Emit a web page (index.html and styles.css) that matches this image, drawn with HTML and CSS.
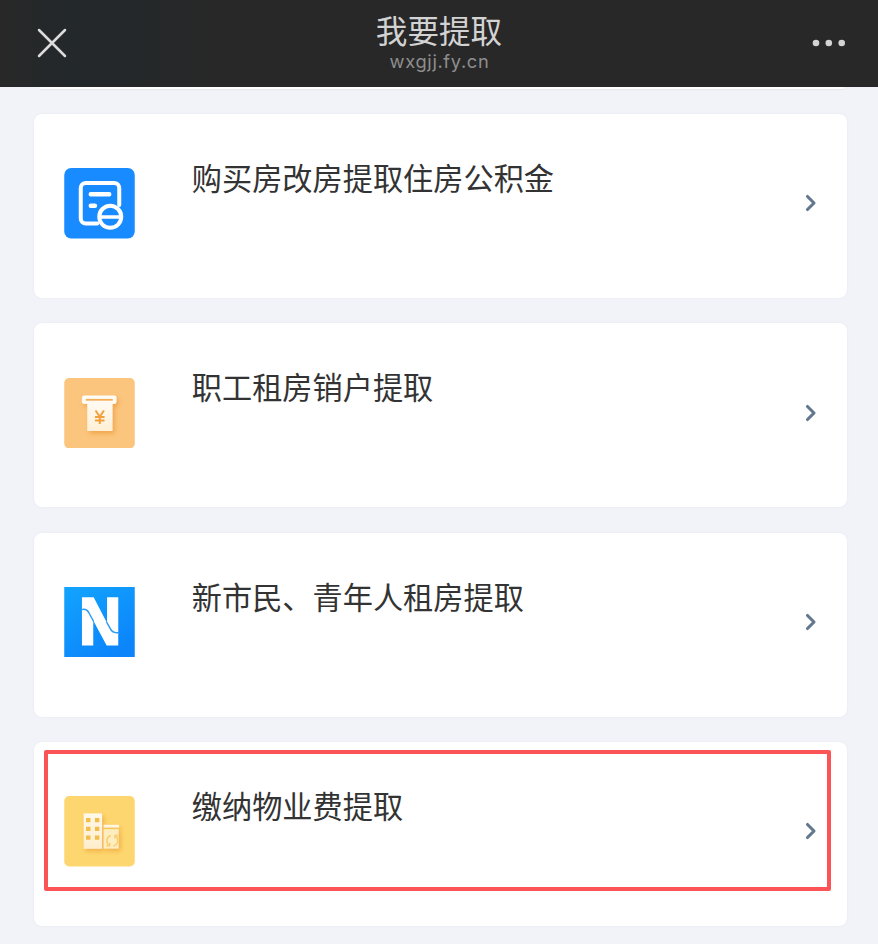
FILE: index.html
```html
<!DOCTYPE html>
<html lang="zh-CN">
<head>
<meta charset="utf-8">
<title>我要提取</title>
<link rel="stylesheet" href="styles.css">
</head>
<body>
<header class="navbar">
  <svg class="close" viewBox="0 0 30 30"><path d="M2 2 28 28M28 2 2 28"/></svg>
  <div class="heading">
    <h1>我要提取</h1>
    <p>wxgjj.fy.cn</p>
  </div>
  <svg class="more" viewBox="0 0 34 8"><circle cx="4" cy="4" r="3.3"/><circle cx="16.8" cy="4" r="3.3"/><circle cx="29.7" cy="4" r="3.3"/></svg>
</header>
<main class="list">
  <div class="previous"></div>
  <a class="card">
    <svg class="icon" viewBox="0 0 70.5 70.5">
      <rect width="70.5" height="70.5" rx="7" fill="#178bff"/>
      <g fill="none" stroke="#fff" stroke-width="4" stroke-linecap="round">
        <path d="M33 55.5H21.5a5 5 0 0 1-5-5V20a5 5 0 0 1 5-5H50a5 5 0 0 1 5 5v17"/>
        <path d="M26.5 26.2H45M26.5 37.8h4.2" stroke-width="4.4"/>
        <circle cx="46" cy="48.8" r="11" fill="#178bff"/>
        <path d="M36 49h20" stroke-width="3.6"/>
      </g>
    </svg>
    <span class="label">购买房改房提取住房公积金</span>
    <svg class="arrow" viewBox="0 0 12 18"><path d="m2.5 2.5 6.5 6.5-6.5 6.5"/></svg>
  </a>
  <a class="card">
    <svg class="icon" viewBox="0 0 70.5 70.5">
      <defs>
        <linearGradient id="cream" x2="0" y2="1"><stop stop-color="#fffdf8"/><stop offset="1" stop-color="#fff0d6"/></linearGradient>
        <filter id="shade" x="-30%" y="-30%" width="170%" height="170%"><feDropShadow dx="2" dy="2.5" stdDeviation="2" flood-color="#e98a22" flood-opacity=".55"/></filter>
      </defs>
      <rect width="70.5" height="70.5" rx="5" fill="#fbc57e"/>
      <g filter="url(#shade)">
        <path d="M20 17.5h30a2.3 2.3 0 0 1 2.3 2.3v3.9a2.3 2.3 0 0 1-2.3 2.3h-1.7v27H23V26h-3a2.3 2.3 0 0 1-2.3-2.3v-3.9a2.3 2.3 0 0 1 2.3-2.3Z" fill="url(#cream)"/>
      </g>
      <path d="M21.5 21.8h27" stroke="#f5ae58" stroke-width="1.8"/>
      <path d="m31.3 32.5 4.2 6.2 4.2-6.2M30.7 39h9.6M30.7 42.5h9.6M35.5 38.5v7.5" fill="none" stroke="#f2a03d" stroke-width="2"/>
    </svg>
    <span class="label">职工租房销户提取</span>
    <svg class="arrow" viewBox="0 0 12 18"><path d="m2.5 2.5 6.5 6.5-6.5 6.5"/></svg>
  </a>
  <a class="card">
    <svg class="icon" viewBox="0 0 70.5 70.5">
      <defs><linearGradient id="sky" x1="0" y1="0" x2=".6" y2="1"><stop stop-color="#12a4fd"/><stop offset="1" stop-color="#0c85fb"/></linearGradient></defs>
      <rect width="70.5" height="70.5" fill="url(#sky)"/>
      <path d="M17.7 10.2H29.4L42.8 36V10.2H54V58.6H42.4L29 33.5V58.6H17.7Z" fill="#fff"/>
      <path d="M17.2 22.6c3.3-.9 5.5-.1 7 2.4L29.4 34.5M42.3 35l4 7.2c1.6 2.9 4.4 4 8.2 3.2" fill="none" stroke="#2d9cf2" stroke-width="1.5"/>
    </svg>
    <span class="label">新市民、青年人租房提取</span>
    <svg class="arrow" viewBox="0 0 12 18"><path d="m2.5 2.5 6.5 6.5-6.5 6.5"/></svg>
  </a>
  <a class="card">
    <svg class="icon" viewBox="0 0 70.5 70.5">
      <rect width="70.5" height="70.5" rx="5" fill="#fdd66f"/>
      <g filter="url(#shade)" opacity=".9">
        <path d="M19.4 17.4h18.4v35.4H19.4Z" fill="url(#cream)"/>
        <path d="M39.4 28.8h15.4v2.7H39.4Z" fill="#fffaf0"/>
        <path d="M39.4 33.2h15v19.4h-15Z" fill="#fff0c8"/>
      </g>
      <path d="M21.8 22h4.4v4.2h-4.4Zm8.9 0h4.4v4.2h-4.4Zm-8.9 8.8h4.4V35h-4.4Zm8.9 0h4.4V35h-4.4Zm-8.9 8.8h4.4v4.2h-4.4Zm8.9 0h4.4v4.2h-4.4Z" fill="#f3bd4b"/>
      <g fill="none" stroke="#f7cf70" stroke-width="1.5"><path d="M46.5 39.5a5.5 5.5 0 0 0-1.5 9.8M49 50a5.5 5.5 0 0 0 2-10"/><path d="M42.3 49.7h3.2v-3M54 39.6h-3.3v3"/></g>
    </svg>
    <span class="label">缴纳物业费提取</span>
    <svg class="arrow" viewBox="0 0 12 18"><path d="m2.5 2.5 6.5 6.5-6.5 6.5"/></svg>
    <span class="highlight"></span>
  </a>
</main>
</body>
</html>
```
FILE: styles.css
```css
* { box-sizing: border-box; }
body {
  margin: 0;
  height: 944px;
  overflow: hidden;
  background: #f2f3f8;
  font-family: "Noto Sans CJK SC", sans-serif;
}
.navbar {
  display: grid;
  grid-template-columns: 66px 1fr 66px;
  height: 87px;
  background: linear-gradient(90deg, #282828 0, #23282b 70px, #24282a 125px, #282828 210px);
}
.close {
  width: 30px;
  height: 30px;
  margin: 28px 0 0 37px;
  fill: none;
  stroke: #dcdcdc;
  stroke-width: 2.5;
  stroke-linecap: round;
}
.heading { text-align: center; }
h1 {
  margin: 9px 0 0;
  color: #d3d3d3;
  font-size: 31.6px;
  line-height: 40px;
  font-weight: 400;
}
.heading p {
  margin: 1px 0 0 1px;
  color: #8e8e8e;
  font: 18.3px/22px Inter, sans-serif;
  letter-spacing: .65px;
}
.more {
  width: 34px;
  height: 8px;
  margin-top: 39px;
  fill: #d3d3d3;
}
.list {
  display: flex;
  flex-direction: column;
  gap: 25.2px;
  padding: 0 31px 0 34px;
}
.previous {
  height: 2px;
  margin: 0 3px 0 6px;
  background: #fff;
  box-shadow: 0 1px 1px #e7e8ed;
}
.card {
  position: relative;
  display: flex;
  flex: none;
  align-items: flex-start;
  height: 184px;
  padding: 54.3px 30px 0 30.3px;
  border-radius: 8px;
  background: #fff;
  box-shadow: 0 0 2px #e2e5ec;
}
.icon {
  flex: none;
  width: 71px;
  height: 70.5px;
}
.label {
  flex: 1;
  margin: -13.3px 0 0 56.5px;
  color: #333;
  font-size: 30.2px;
  line-height: 44px;
  font-weight: 400;
}
.arrow {
  flex: none;
  width: 12px;
  height: 18px;
  margin-top: 26px;
  fill: none;
  stroke: #62788e;
  stroke-width: 3.1;
  stroke-linecap: round;
  stroke-linejoin: round;
}
.highlight {
  position: absolute;
  top: 8px;
  left: 10px;
  width: 787px;
  height: 141px;
  border: 4px solid #fc5356;
  border-radius: 2px;
}
```
